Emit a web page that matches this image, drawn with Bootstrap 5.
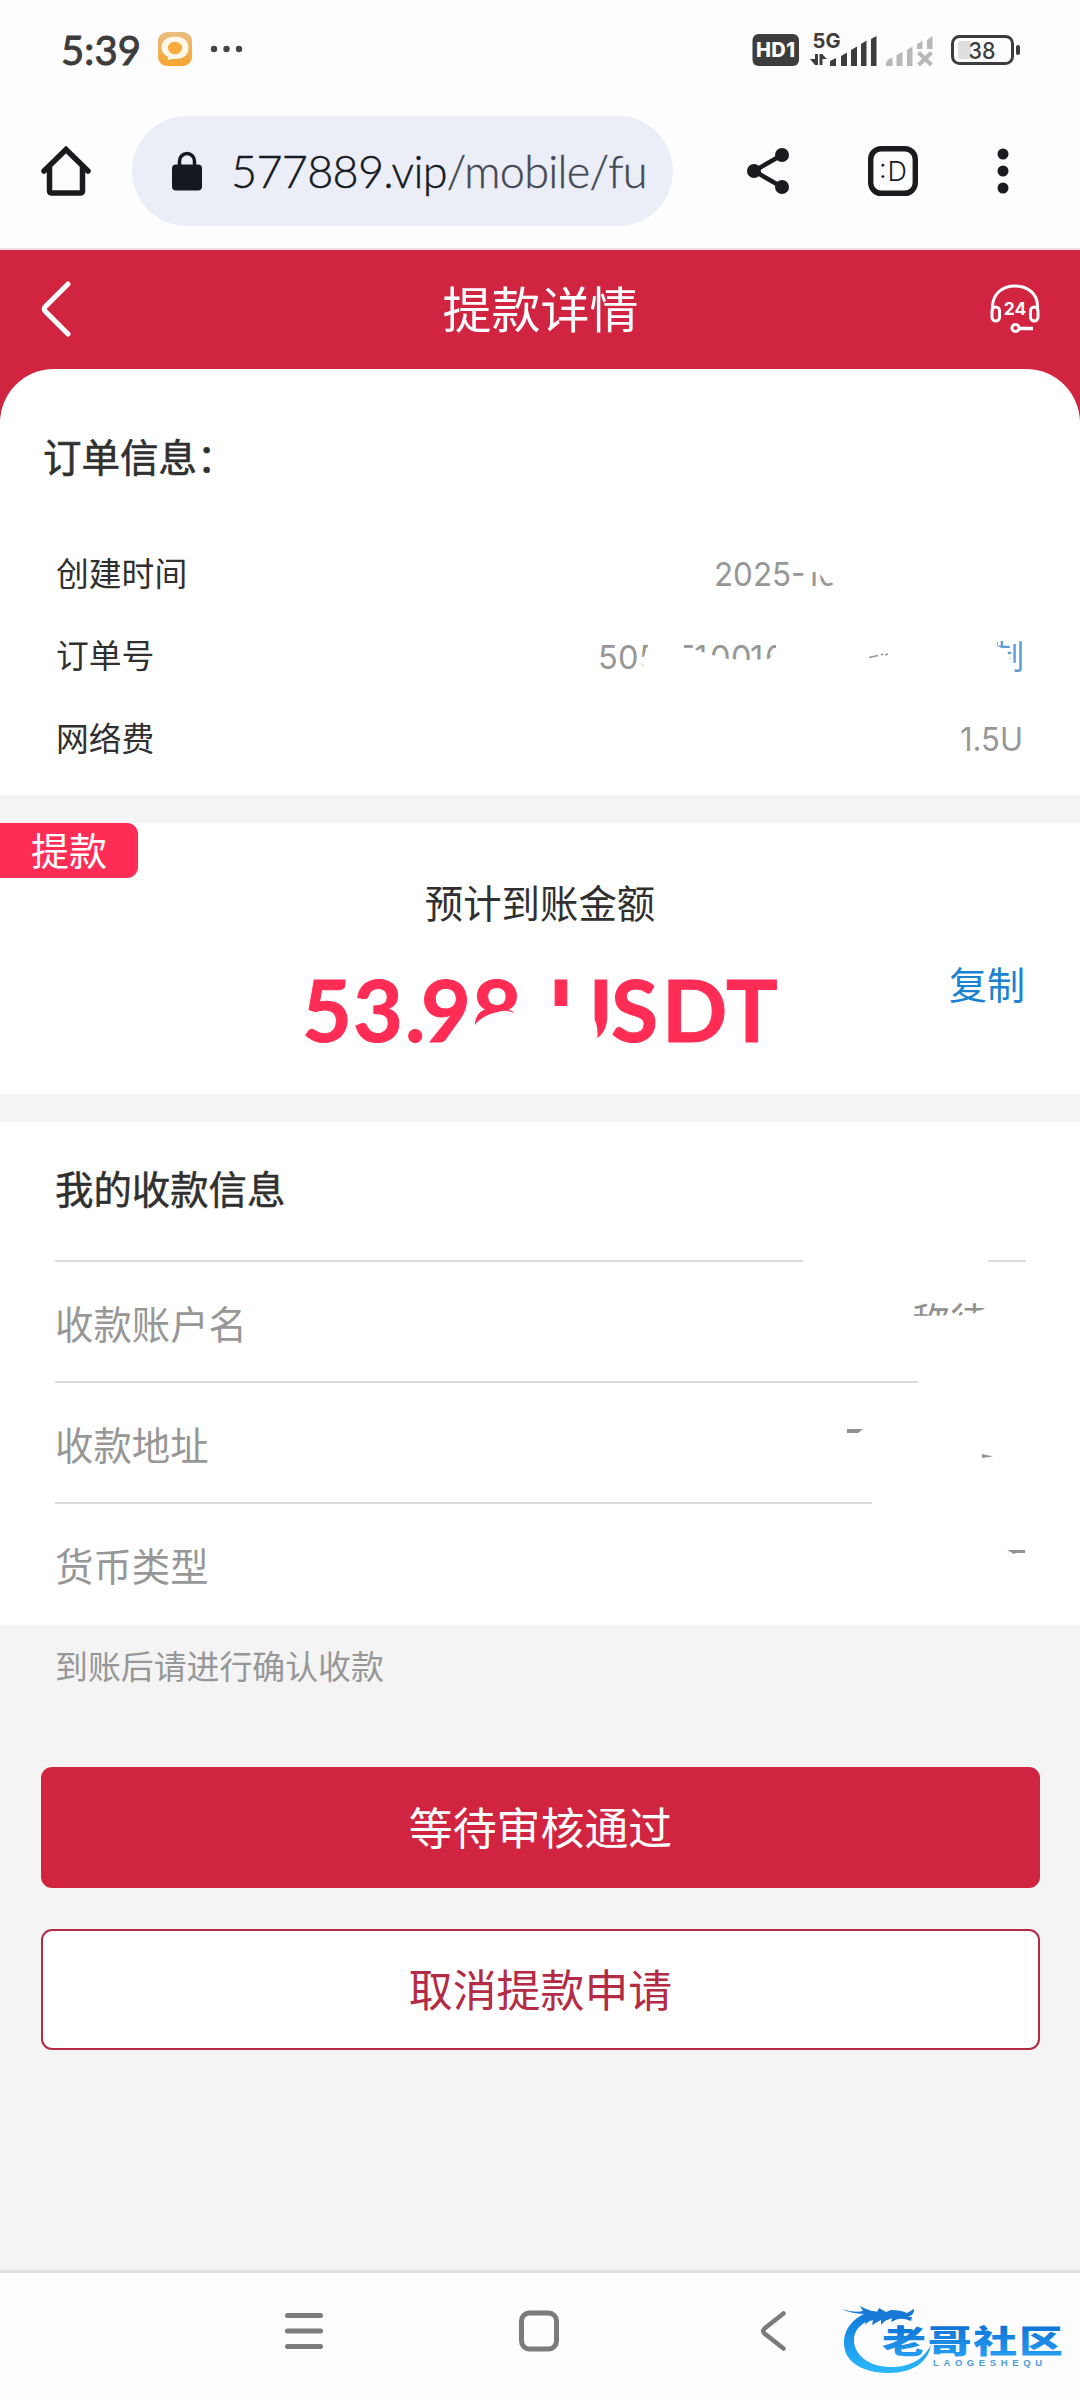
<!DOCTYPE html>
<html lang="zh-CN">
<head>
<meta charset="utf-8">
<meta name="viewport" content="width=device-width, initial-scale=1">
<title>提款详情</title>
<link href="https://cdn.jsdelivr.net/npm/bootstrap@5.3.0/dist/css/bootstrap.min.css" rel="stylesheet">
<script src="https://cdn.jsdelivr.net/npm/bootstrap@5.3.0/dist/js/bootstrap.bundle.min.js"></script>
<style>
:root{--brand:#d12441;--hot:#ff2d55;--ink:#303030;--mute:#979797;--page:#f4f4f4}
html,body{margin:0;overflow-x:hidden}
body{font-family:"Noto Sans CJK SC",sans-serif;background:var(--page);color:var(--ink);line-height:1}
svg{display:block;flex:none}
.phone{width:1080px;height:2400px;overflow:hidden}
.chrome-bg{background:#fdfdff}
.status{height:102px;padding:0 60px 4px 61px}
.clock{font:400 40px/1 Lato,sans-serif;color:#3d3d3d;letter-spacing:.1px;width:78px;-webkit-text-stroke:1px #3d3d3d;padding-top:2px}
.browser{height:148px;padding:14px 71px 22px 41px;border-bottom:2px solid #f6dae2}
.tools{width:262px}
.omni{width:541px;height:110px;background:#ebeef7;margin-left:41px;padding-left:40px}
.addr{font:300 45px/1 Lato,sans-serif;color:#444a55;margin-left:29px;white-space:nowrap;letter-spacing:-.72px;-webkit-text-stroke:.4px currentColor}
.addr b{font-weight:300;color:#161a22}
.hero{background:var(--brand)}
.topbar{height:119px;padding:0 40px 2px 41px}
.topbar h1{font-size:49px;font-weight:400;line-height:1;margin:0;padding:0 0 4px 20px}
.sheet{border-radius:54px 54px 0 0;height:426px;padding:0 56px 0 43px}
.sheet h2{font-size:38.5px;font-weight:400;-webkit-text-stroke:.6px currentColor;line-height:56px;margin:0;padding-top:58px}
.info{padding-left:13px;margin-top:49px}
.info-line{height:82.5px;font-size:32.8px}
.info-line span{padding-bottom:2px}
.amount{height:271px;margin-top:28px}
.tag{width:138px;height:55px;background:var(--hot);border-radius:0 11px 11px 0;font-size:38px;padding:0 0 4px 31px}
.expect{font-size:38.4px;line-height:46px;padding-bottom:17px}
.payee{height:503px;margin-top:28px;padding:0 54px 0 55px}
.payee h2{font-size:38.4px;font-weight:400;-webkit-text-stroke:.5px currentColor;height:138px;margin:0;padding-bottom:7px}
.field{height:121px;font-size:38.4px;color:var(--mute)}
.field span{padding-top:3px}
.rule{height:2px;background:#dcdcdc;margin-bottom:-2px}
.note{font-size:32.9px;color:var(--mute);line-height:40px;padding:20px 0 2px 55px}
.actions{padding:80px 40px 0 41px;gap:41px}
.actions .btn{height:121px;border-radius:11px;font-size:43.9px;line-height:1;border-width:2px;padding:0 0 2px}
.btn-fill{background:var(--brand);color:#fff;border-color:var(--brand)}
.btn-line{background:#fff;color:#b42b45;border-color:#b42b45}
.sysbar{height:130px;border-top:3px solid #dfdfdf;gap:195px;padding:0 2px 11px 0}
.mark-logo{position:absolute;right:10px;top:20px}
</style>
</head>
<body>
<div class="phone d-flex flex-column">
  <header class="chrome-bg">
    <div class="status d-flex align-items-center">
      <span class="clock">5:39</span>
      <svg class="ms-3" width="98" height="38" viewBox="155 31 98 38">
        <defs><linearGradient id="og" x1="0" y1="0" x2="0" y2="1"><stop offset="0" stop-color="#e8bd80"/><stop offset="1" stop-color="#f7a52f"/></linearGradient></defs>
        <rect x="158" y="33" width="34" height="34" rx="9" fill="url(#og)"/>
        <path d="M175 37.500c9 0 13.500 5 13.500 11.500S184 60 175 60l-4 0q-1 1-3.500 1l1-3q-7-3-7-9.500c0-6 4.500-11 13.500-11z" fill="#fff8e8"/>
        <ellipse cx="175" cy="49" rx="7" ry="6.300" fill="#fbab3c"/>
        <g fill="#444"><circle cx="214" cy="50" r="3.200"/><circle cx="226.500" cy="50" r="3.200"/><circle cx="239" cy="50" r="3.200"/></g>
      </svg>
      <svg class="ms-auto" width="270" height="40" viewBox="750 29 270 40" font-family="Inter,sans-serif">
        <rect x="752.500" y="34" width="46.500" height="32" rx="6" fill="#3d3d3d"/>
        <text x="756" y="57" font-size="20" font-weight="800" fill="#fff" textLength="39">HD1</text>
        <text x="812.500" y="48" font-size="20" font-weight="700" fill="#3d3d3d" textLength="28" lengthAdjust="spacingAndGlyphs">5G</text>
        <g fill="none" stroke="#3d3d3d" stroke-width="3"><path d="M816.500 54v11M821 54v11"/></g>
        <path d="M810 59h5v6zM822 54l5 5h-5z" fill="#3d3d3d"/>
        <g fill="#3d3d3d"><path d="M830 66v-4q0-1 1-1.500l5-2.500v8zM841 66V56l6-3.500V66zM851 66V50l6-3.500V66zM861 66V44l5.500-3.500V66zM871 66V39l5.500-3V66z"/></g>
        <g fill="#b8b8b8"><path d="M886 66v-3q1-4 6.500-5.500V66zM896.500 66V55l6-3V66zM907 66V50l5.500-3.500V66zM917 49v-5l5.500-3v8zM927 49V40l5.500-4v13z"/></g>
        <path d="M918.500 52.500l13 12.500m0-12.500l-13 12.500" stroke="#b8b8b8" stroke-width="4"/>
        <rect x="952.500" y="36.500" width="60" height="27" rx="7" fill="none" stroke="#3d3d3d" stroke-width="3"/>
        <rect x="958" y="41" width="13" height="18" rx="2" fill="#dedede"/>
        <rect x="1016" y="45" width="4" height="10" rx="2" fill="#3d3d3d"/>
        <text x="968.500" y="58.500" font-size="23" font-weight="500" fill="#3d3d3d" textLength="27" lengthAdjust="spacingAndGlyphs">38</text>
      </svg>
    </div>
    <div class="browser d-flex align-items-center">
      <svg width="50" height="50" viewBox="0 0 50 50" fill="none" stroke="#191b1f" stroke-width="5.500" stroke-linecap="round" stroke-linejoin="round"><path d="M3 25L25 3.500 47 25" stroke-linejoin="miter"/><path d="M8.500 21v23.500q0 2.500 2.500 2.500h28q2.500 0 2.500-2.500V21"/></svg>
      <div class="omni rounded-pill d-flex align-items-center">
        <svg width="30" height="40" viewBox="0 0 30 40"><path d="M7.500 17V10a7.500 7.500 0 0 1 15 0v7" fill="none" stroke="#15191f" stroke-width="3.500"/><rect y="13.500" width="30" height="26" rx="4" fill="#15191f"/></svg>
        <span class="addr"><b>577889.vip</b>/mobile/fu</span>
      </div>
      <div class="tools d-flex align-items-center justify-content-between ms-auto">
        <svg width="42" height="48" viewBox="0 0 42 48" fill="#191b1f"><path d="M35 8L7 24l28 16" fill="none" stroke="#191b1f" stroke-width="4.500"/><circle cx="35" cy="8" r="7"/><circle cx="7" cy="24" r="7"/><circle cx="35" cy="40" r="7"/></svg>
        <svg width="50" height="50" viewBox="0 0 50 50"><rect x="2.700" y="2.700" width="44.600" height="44.600" rx="10.500" fill="none" stroke="#191b1f" stroke-width="5.400"/><text x="11" y="35" font-family="Inter,sans-serif" font-size="27" font-weight="300" fill="#191b1f" textLength="28">:D</text></svg>
        <svg width="12" height="46" viewBox="0 0 12 46" fill="#191b1f"><circle cx="6" cy="6" r="5.500"/><circle cx="6" cy="23" r="5.500"/><circle cx="6" cy="40" r="5.500"/></svg>
      </div>
    </div>
  </header>

  <main class="flex-grow-1">
    <div class="hero">
      <div class="topbar d-flex align-items-center justify-content-between text-white">
        <svg width="30" height="56" viewBox="0 0 30 56"><path d="M27 3L4 26q-1.500 2 0 4l23 23" fill="none" stroke="#fff" stroke-width="5" stroke-linecap="round"/></svg>
        <h1>提款详情</h1>
        <svg width="50" height="50" viewBox="0 0 50 50" fill="none" stroke="#fff" stroke-width="3">
          <path d="M2.500 27V22C3 10 12 2 25 2s22.500 8 22.500 20v5"/>
          <rect x="2" y="23" width="7.500" height="14" rx="3.700"/><rect x="40.500" y="23" width="7.500" height="14" rx="3.700"/>
          <circle cx="25.500" cy="44" r="3.600"/><path d="M29 44.500h14" stroke-width="3.500"/>
          <text x="25" y="30.500" text-anchor="middle" font-family="Inter,sans-serif" font-size="17.500" font-weight="700" fill="#fff" stroke="none">24</text>
        </svg>
      </div>
      <section class="sheet bg-white">
        <h2>订单信息：</h2>
        <div class="info">
          <div class="info-line d-flex align-items-center justify-content-between"><span>创建时间</span>
            <svg width="440" height="60" viewBox="584 543 440 60" font-family="Inter,sans-serif" font-size="32.500" fill="#979797">
              <clipPath id="c1"><path d="M584 543h221v29h13l6 7 14 7v10H584z"/></clipPath>
              <text x="714" y="585.500" clip-path="url(#c1)" textLength="124" lengthAdjust="spacingAndGlyphs">2025-10</text></svg>
          </div>
          <div class="info-line d-flex align-items-center justify-content-between"><span>订单号</span>
            <svg width="440" height="60" viewBox="584 626 440 60" font-family="Inter,sans-serif" font-size="32.500" fill="#979797">
              <clipPath id="c2"><path d="M590 640h60l-5 14-4 8 4 8h-55zM684 640h92v9l-7 10-19 1-22-1-16-4-16-5-12-1z"/></clipPath>
              <text y="668.500" clip-path="url(#c2)" x="598 618 639 676 694 710 731 750 765">505510016</text>
              <path d="M869 657.500l9-2M881 655l2-1M885 655l3-1" stroke="#979797" stroke-width="1.500"/>
              <clipPath id="c3"><path d="M997 640h27v34h-14v-14l-3-10-10-4z"/></clipPath>
              <text x="991" y="668.500" font-family="Noto Sans CJK SC,sans-serif" font-size="33" fill="#5f9bd3" clip-path="url(#c3)">制</text></svg>
          </div>
          <div class="info-line d-flex align-items-center justify-content-between"><span>网络费</span>
            <svg width="440" height="60" viewBox="585 708 440 60" font-family="Inter,sans-serif" font-size="32.500" fill="#979797"><text x="961" y="750.500" textLength="63" lengthAdjust="spacingAndGlyphs">1.5U</text></svg>
          </div>
        </div>
      </section>
    </div>

    <section class="amount bg-white">
      <div class="tag text-white d-flex align-items-center">提款</div>
      <div class="expect text-center">预计到账金额</div>
      <svg width="1080" height="130" viewBox="0 940 1080 130">
        <clipPath id="c4"><path d="M290 960h240v54l-9 0-7-2q-8-4-16-1-16 3-24 14l-12 30H290zM550 960h26v45h-26zM592 960h200v100H603l-9-8q6-18 2-30l-4-10z"/></clipPath>
        <text y="1041" font-family="Lato,sans-serif" font-weight="700" font-size="86" fill="#ff2d55" stroke="#ff2d55" stroke-width="1" clip-path="url(#c4)" x="302 353 405 421 472 520 549 611 662 726">53.98 USDT</text>
        <text x="949" y="998" font-size="38" fill="#1a82cf">复制</text>
      </svg>
    </section>

    <section class="payee bg-white">
      <h2 class="d-flex align-items-center">我的收款信息</h2>
      <div class="d-flex justify-content-between"><div class="rule" style="width:748px"></div><div class="rule" style="width:38px"></div></div>
      <div class="field d-flex align-items-center justify-content-between"><span>收款账户名</span>
        <svg width="120" height="60" viewBox="906 1293 120 60"><clipPath id="c5"><path d="M910 1300h76v10l-16 7-58 1z"/></clipPath><text x="912" y="1337" font-size="38" fill="#909090" clip-path="url(#c5)">称待</text></svg>
      </div>
      <div class="rule" style="width:863px"></div>
      <div class="field d-flex align-items-center justify-content-between"><span>收款地址</span>
        <svg width="190" height="60" viewBox="836 1412 190 60" fill="#929292"><path d="M847 1429h16l-5 4h-11zM982 1454l11 2.500-11 1.500z"/></svg>
      </div>
      <div class="rule" style="width:817px"></div>
      <div class="field d-flex align-items-center justify-content-between"><span>货币类型</span>
        <svg width="40" height="60" viewBox="986 1533 40 60" fill="#929292"><path d="M1007 1550h18v3h-9l-2 1z"/></svg>
      </div>
    </section>

    <div class="note">到账后请进行确认收款</div>
    <div class="actions d-grid">
      <button class="btn btn-fill" type="button">等待审核通过</button>
      <button class="btn btn-line" type="button">取消提款申请</button>
    </div>
  </main>

  <footer class="sysbar chrome-bg position-relative d-flex align-items-center justify-content-center">
    <svg width="40" height="42" viewBox="0 0 40 42" stroke="#7b7b7b" stroke-width="5" stroke-linecap="round"><path d="M3.500 5.500h33M3.500 21h33M3.500 36.500h33"/></svg>
    <svg width="40" height="42" viewBox="0 0 40 42"><rect x="2.500" y="3" width="35" height="36" rx="8" fill="none" stroke="#7b7b7b" stroke-width="5"/></svg>
    <svg width="40" height="42" viewBox="0 0 40 42"><path d="M29.500 3.500L10.500 18.500q-2.500 2.500 0 5l19 15" fill="none" stroke="#7b7b7b" stroke-width="4.500" stroke-linecap="round"/></svg>
    <svg class="mark-logo" width="230" height="90" viewBox="840 2293 230 90">
      <defs><linearGradient id="bl" gradientUnits="userSpaceOnUse" x1="0" y1="2310" x2="0" y2="2372"><stop offset="0" stop-color="#0c76d8"/><stop offset="1" stop-color="#2bb8fb"/></linearGradient>
      <linearGradient id="bt" x1="0" y1="0" x2="0" y2="1"><stop offset=".2" stop-color="#0d72d6"/><stop offset="1" stop-color="#2aa4f4"/></linearGradient></defs>
      <path d="M872 2311C852 2317 844 2330 844 2343c0 20 20 30 45 30 24 0 39-11 42-28-6 12-18 21-36 22-24 1-39-10-41-25-1-12 7-19 20-24l8-2-3-4z" fill="url(#bl)"/>
      <path d="M842 2309q11 4 21 2l-3-5q9 5 17 6l2-4 7 4 5-2q10 0 16 3l7-4q1 5-6 8l4 0-1 4q-7-3-13-2l-7 3 1-4-7 3-4 4 0-5-9 5 1-5q-5 1-8 5l1-5-5 1 6-7q-16 0-25-5z" fill="#1679d4"/>
      <g transform="translate(882 2352.500) scale(1.370 1)"><text font-size="32" font-weight="900" fill="url(#bt)" textLength="132" lengthAdjust="spacing">老哥社区</text></g>
      <text x="933" y="2366" font-family="Liberation Sans,sans-serif" font-size="9.500" font-weight="700" fill="#4e9cd8" textLength="109">LAOGESHEQU</text>
    </svg>
  </footer>
</div>
</body>
</html>
